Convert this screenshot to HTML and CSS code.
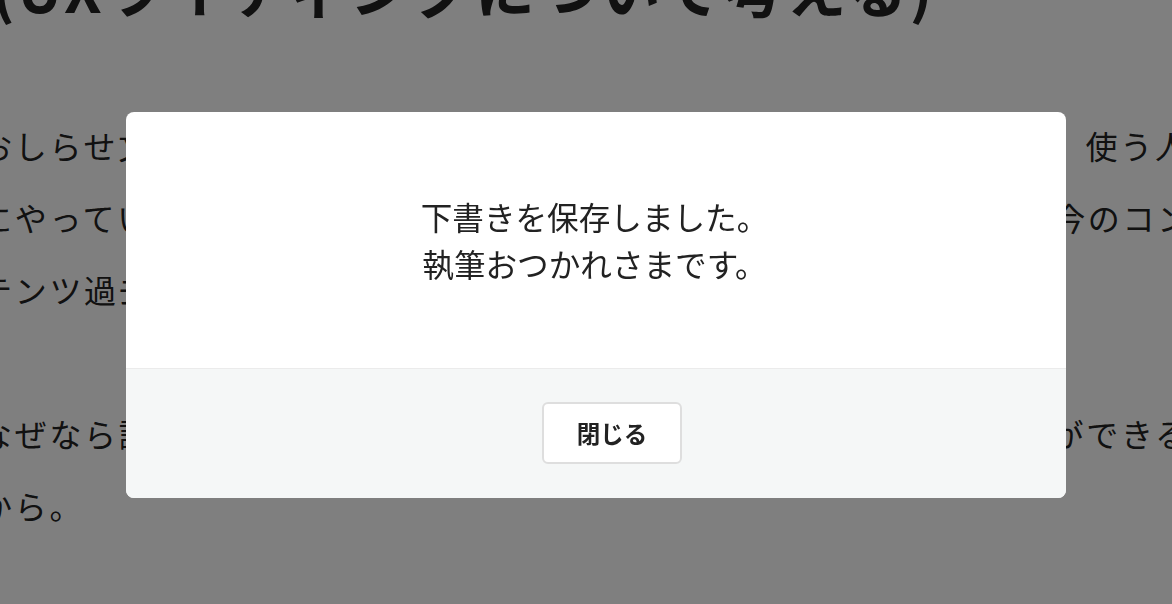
FILE: index.html
```html
<!DOCTYPE html>
<html lang="ja">
<head>
<meta charset="utf-8">
<title>下書きを保存しました</title>
<link rel="stylesheet" href="styles.css">
</head>
<body>
<div class="page">
  <article class="article">
    <h1 class="title">(UXライティングについて考える)</h1>
    <p class="para">おしらせ文やエラーメッセージなど、サービスの言葉をつくるときは、使う人の立場に立つことを大切にしています。<br>にやっていることは、これまでと大きく変わりません。ただし、まず今のコンテンツを見直すことから始めました。<br>テンツ過去の記事も含めて見直すようにしています。</p>
    <p class="para">なぜなら読み手の不安を取り除いて、迷わずに次の行動へと進むことができるようになる<br>から。</p>
  </article>
</div>
<div class="overlay">
  <div class="modal" role="dialog" aria-modal="true">
    <div class="modal-body">
      <p class="modal-message">下書きを保存しました。<br>執筆おつかれさまです。</p>
    </div>
    <div class="modal-footer">
      <button class="btn-close" type="button">閉じる</button>
    </div>
  </div>
</div>
</body>
</html>
```
FILE: styles.css
```css
html, body {
  margin: 0;
  height: 100%;
  overflow: hidden;
  background: #fff;
}

body {
  font-family: "Noto Sans CJK JP", "Noto Sans", sans-serif;
  color: #222;
}

.article {
  margin-left: -20px;
  white-space: nowrap;
}

.title {
  font-size: 60px;
  font-weight: 700;
  line-height: 90px;
  letter-spacing: 2.6px;
  margin: -58px 0 77px 12px;
}

.para {
  font-size: 32px;
  line-height: 72px;
  letter-spacing: 2.7px;
  margin: 0;
}

.para + .para {
  margin-top: 72px;
}

.overlay {
  position: fixed;
  inset: 0;
  background: rgba(0, 0, 0, 0.5);
  display: flex;
  align-items: flex-start;
  justify-content: flex-start;
  padding: 112px 0 0 126px;
  box-sizing: border-box;
}

.modal {
  width: 940px;
  background: #fff;
  border-radius: 8px;
  overflow: hidden;
}

.modal-body {
  padding: 81px 0;
  text-align: center;
}

.modal-message {
  margin: 0 0 0 -3px;
  font-size: 31.6px;
  line-height: 47px;
  color: #222;
}

.modal-footer {
  border-top: 1px solid #ebebeb;
  background: #f5f7f7;
  padding: 33px 0 34px 32px;
  display: flex;
  justify-content: center;
}

.btn-close {
  width: 140px;
  height: 62px;
  box-sizing: border-box;
  border: 2px solid #dedede;
  border-radius: 6px;
  background: #fff;
  color: #222;
  font-family: "Noto Sans CJK JP", "Noto Sans", sans-serif;
  font-size: 23.5px;
  font-weight: 700;
  cursor: pointer;
}
```
